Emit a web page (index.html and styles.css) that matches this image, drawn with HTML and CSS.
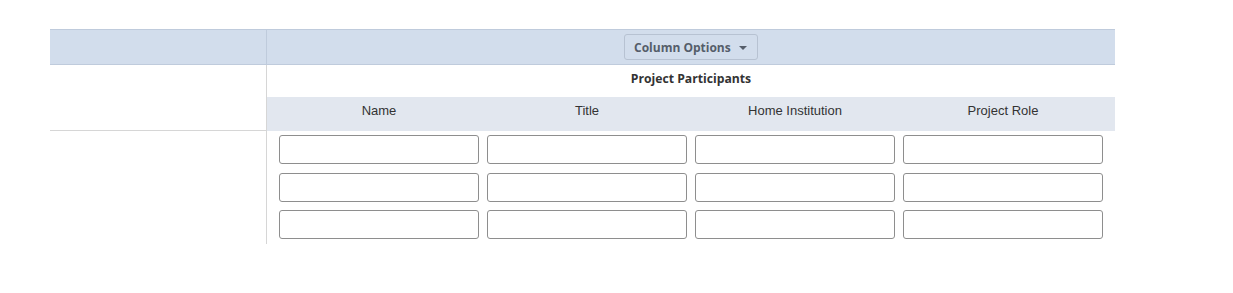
FILE: index.html
```html
<!DOCTYPE html>
<html lang="en">
<head>
  <meta charset="UTF-8" />
  <title>Project Participants</title>
  <link rel="stylesheet" href="styles.css">
</head>
<body>

  <div class="sheet">
    <div class="toolbar-side"></div>
    <div class="toolbar">
      <button class="col-btn">Column Options <span class="caret"></span></button>
    </div>

    <div class="side">
      <div class="side-head"></div>
    </div>

    <div class="main">
      <div class="group-title">Project Participants</div>
      <div class="head-row">
        <div class="head-cell">Name</div>
        <div class="head-cell">Title</div>
        <div class="head-cell">Home Institution</div>
        <div class="head-cell">Project Role</div>
      </div>
      <div class="rows">
        <input class="cell-input" type="text">
        <input class="cell-input" type="text">
        <input class="cell-input" type="text">
        <input class="cell-input" type="text">
        <input class="cell-input" type="text">
        <input class="cell-input" type="text">
        <input class="cell-input" type="text">
        <input class="cell-input" type="text">
        <input class="cell-input" type="text">
        <input class="cell-input" type="text">
        <input class="cell-input" type="text">
        <input class="cell-input" type="text">
      </div>
    </div>
  </div>

</body>
</html>
```

FILE: styles.css
```css
:root {
  --bar-bg: #d2ddec;
  --bar-line: #bfcbdc;
  --head-bg: #e2e7ef;
  --grid-line: #d6d6d6;
  --text: #333333;
}

body {
  margin: 0;
  background: #ffffff;
  color: var(--text);
  font-family: 'Liberation Sans', Arial, sans-serif;
}

.sheet {
  display: grid;
  grid-template-columns: 217px 848px;
  margin: 29px 0 0 50px;
  width: 1065px;
}

.toolbar-side,
.toolbar {
  background: var(--bar-bg);
  border-top: 1px solid var(--bar-line);
  border-bottom: 1px solid var(--bar-line);
  height: 34px;
}

.toolbar-side {
  border-right: 1px solid var(--bar-line);
}

.toolbar {
  display: flex;
  align-items: center;
  justify-content: center;
}

.col-btn {
  display: flex;
  align-items: center;
  gap: 8px;
  height: 26px;
  width: 134px;
  padding: 0 0 0 9px;
  background: var(--bar-bg);
  border: 1px solid #b7c2d2;
  border-radius: 3px;
  color: #555d6a;
  font-family: 'Open Sans', sans-serif;
  font-weight: 700;
  font-size: 12px;
  cursor: pointer;
}

.caret {
  width: 0;
  height: 0;
  border-left: 4px solid transparent;
  border-right: 4px solid transparent;
  border-top: 4px solid #555d6a;
  margin-top: 2px;
}

.side {
  border-right: 1px solid var(--grid-line);
}

.side-head {
  height: 65px;
  border-bottom: 1px solid var(--grid-line);
}

.main {
  display: flex;
  flex-direction: column;
}

.group-title {
  height: 26px;
  padding-bottom: 6px;
  display: flex;
  align-items: center;
  justify-content: center;
  font-family: 'Open Sans', sans-serif;
  font-weight: 700;
  font-size: 12.2px;
}

.head-row {
  display: grid;
  grid-template-columns: repeat(4, 208px);
  padding: 0 8px 0 8px;
  height: 34px;
  background: var(--head-bg);
}

.head-cell {
  display: flex;
  justify-content: center;
  padding-top: 6px;
  font-size: 13px;
}

.rows {
  display: grid;
  grid-template-columns: repeat(4, 200px);
  column-gap: 8px;
  row-gap: 8.5px;
  padding: 4px 12px 5px 12px;
}

.cell-input {
  box-sizing: border-box;
  width: 200px;
  height: 29px;
  margin: 0;
  border: 1px solid #8e8e8e;
  border-radius: 3px;
  background: #ffffff;
}
```
